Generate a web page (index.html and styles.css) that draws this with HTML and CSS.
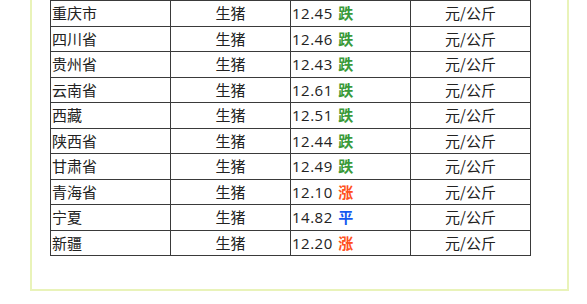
FILE: index.html
```html
<!DOCTYPE html>
<html lang="zh">
<head>
<meta charset="utf-8">
<link rel="stylesheet" href="styles.css">
</head>
<body>
<div class="box">
  <table class="price">
    <tr><td class="c1">重庆市</td><td class="c2">生猪</td><td class="c3">12.45 <b class="down">跌</b></td><td class="c4">元/公斤</td></tr>
    <tr><td class="c1">四川省</td><td class="c2">生猪</td><td class="c3">12.46 <b class="down">跌</b></td><td class="c4">元/公斤</td></tr>
    <tr><td class="c1">贵州省</td><td class="c2">生猪</td><td class="c3">12.43 <b class="down">跌</b></td><td class="c4">元/公斤</td></tr>
    <tr><td class="c1">云南省</td><td class="c2">生猪</td><td class="c3">12.61 <b class="down">跌</b></td><td class="c4">元/公斤</td></tr>
    <tr><td class="c1">西藏</td><td class="c2">生猪</td><td class="c3">12.51 <b class="down">跌</b></td><td class="c4">元/公斤</td></tr>
    <tr><td class="c1">陕西省</td><td class="c2">生猪</td><td class="c3">12.44 <b class="down">跌</b></td><td class="c4">元/公斤</td></tr>
    <tr><td class="c1">甘肃省</td><td class="c2">生猪</td><td class="c3">12.49 <b class="down">跌</b></td><td class="c4">元/公斤</td></tr>
    <tr><td class="c1">青海省</td><td class="c2">生猪</td><td class="c3">12.10 <b class="up">涨</b></td><td class="c4">元/公斤</td></tr>
    <tr><td class="c1">宁夏</td><td class="c2">生猪</td><td class="c3">14.82 <b class="flat">平</b></td><td class="c4">元/公斤</td></tr>
    <tr><td class="c1">新疆</td><td class="c2">生猪</td><td class="c3">12.20 <b class="up">涨</b></td><td class="c4">元/公斤</td></tr>
  </table>
</div>
</body>
</html>
```
FILE: styles.css
```css
html, body {
  margin: 0;
  padding: 0;
  background: #ffffff;
}
body {
  font-family: "Noto Sans CJK SC", "Noto Sans", sans-serif;
  font-size: 15px;
  color: #222;
}
.box {
  margin-left: 30px;
  width: 517px;
  border: 2px solid #e9f3b9;
  border-top: none;
  padding: 0 0 33px 18px;
}
.price {
  border-collapse: collapse;
  width: 481px;
  table-layout: fixed;
}
.price td {
  border: 1px solid #3a3a3a;
  height: 24.5px;
  padding: 0 1px;
  line-height: 20px;
  white-space: nowrap;
  overflow: hidden;
}
.c1 { text-align: left; }
.c2 { text-align: center; }
.c3 {
  text-align: left;
  font-family: "Open Sans", "Noto Sans CJK SC", sans-serif;
  letter-spacing: 0.5px;
  word-spacing: 1px;
}
.c4 { text-align: center; }
.price b { font-weight: bold; font-family: "Noto Sans CJK SC", sans-serif; }
.down { color: #3a9a3a; }
.up { color: #ff5020; }
.flat { color: #1458f0; }
```
